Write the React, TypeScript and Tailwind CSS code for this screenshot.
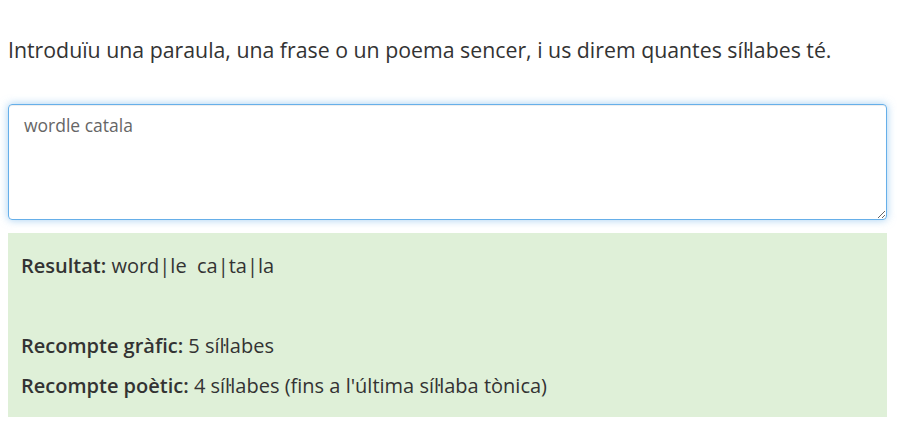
export default function App() {
  return (
    <div className="min-h-screen bg-white px-2 font-['Open_Sans',sans-serif] text-[#333]">
      <p className="pt-[35px] text-[21.3px] leading-[30px]">
        Introduïu una paraula, una frase o un poema sencer, i us direm quantes síŀlabes té.
      </p>

      <textarea
        autoFocus
        defaultValue="wordle catala"
        className="mt-[39px] block h-[116px] w-[879px] rounded-[4px] border border-[#66afe9] px-[15px] py-[7px] text-[17.5px] leading-[26px] text-[#666] caret-[#333] shadow-[inset_0_1px_1px_rgba(0,0,0,0.075),0_0_8px_rgba(102,175,233,0.6)] outline-none"
      />

      <div className="mt-[13px] flex w-[879px] flex-col gap-[13px] bg-[#dff0d8] px-[13px] pb-[18px] pt-[19px] text-[20px] leading-[27px]">
        <p>
          <b className="font-semibold">Resultat:</b> word|le&nbsp; ca|ta|la
        </p>
        <p>&nbsp;</p>
        <p>
          <b className="font-semibold">Recompte gràfic:</b> 5 síŀlabes
        </p>
        <p>
          <b className="font-semibold">Recompte poètic:</b> 4 síŀlabes (fins a l'última síŀlaba tònica)
        </p>
      </div>
    </div>
  )
}
